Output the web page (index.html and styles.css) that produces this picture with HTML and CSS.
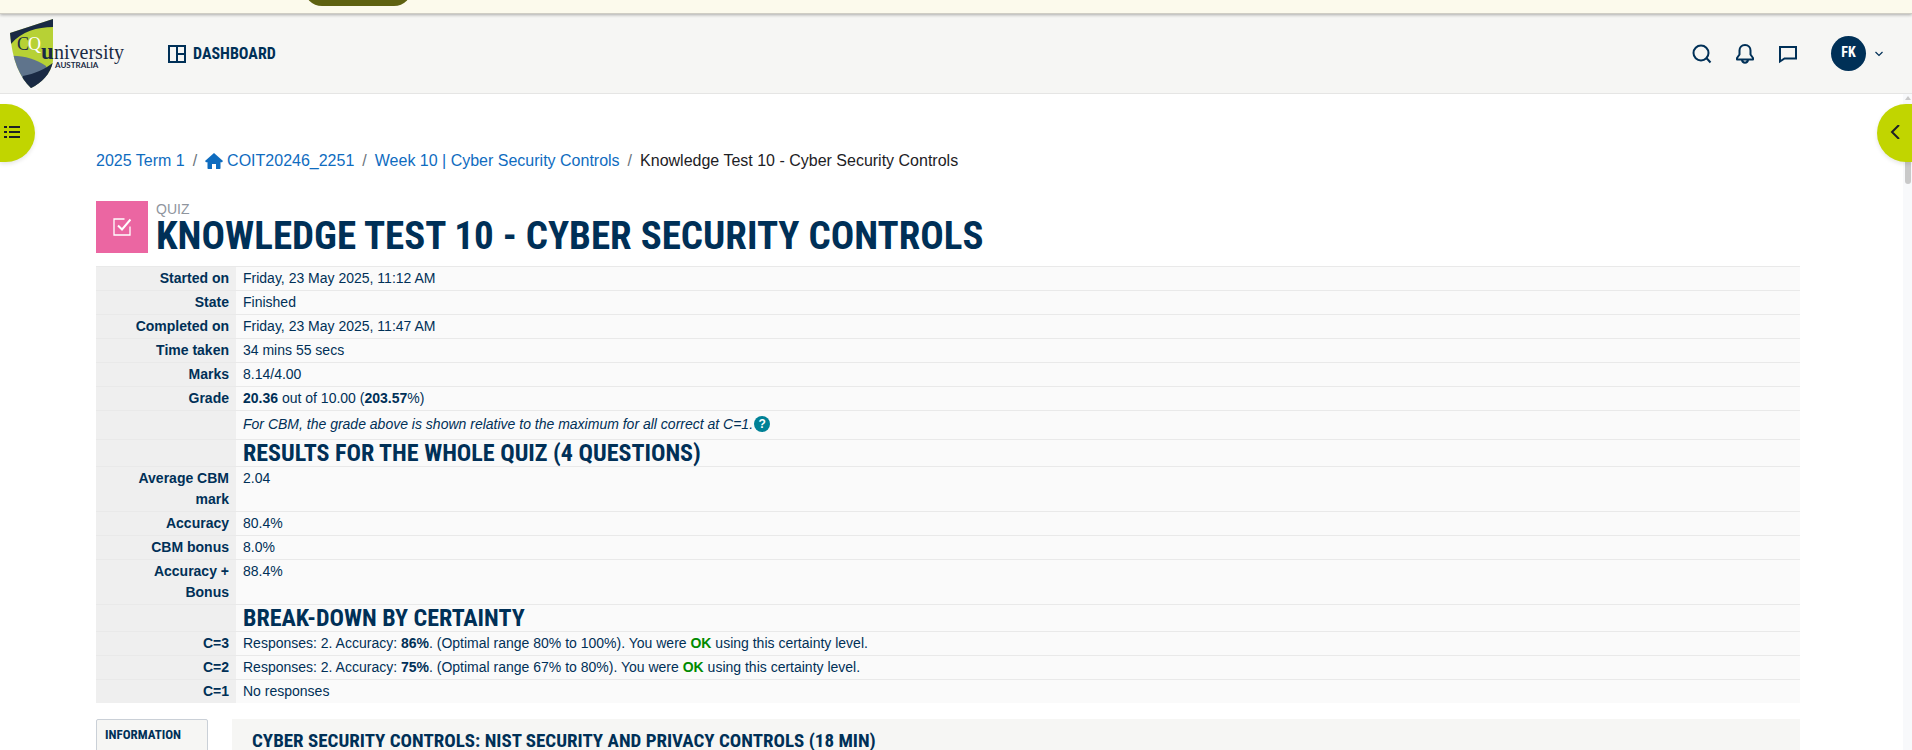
FILE: index.html
```
<!DOCTYPE html>
<html lang="en">
<head>
<meta charset="utf-8">
<title>Knowledge Test 10 - Cyber Security Controls</title>
<link rel="stylesheet" href="styles.css">
</head>
<body>
<div class="notice"><button class="notice-button" type="button" aria-label="Notice action"></button></div>
<header class="navbar">
  <a class="brand" href="#" aria-label="CQUniversity Australia">
    <svg class="logo" viewBox="0 0 120 72" role="img" aria-hidden="true">
      <defs><clipPath id="shield"><path d="M2 15 45 1V43C43 56 33 65 23 70 12 60 4 42 2 15Z"/></clipPath></defs>
      <g clip-path="url(#shield)">
        <rect width="46" height="72" fill="#b7d135"/>
        <path d="M0 0H46V9C30 9 14 13 3 26L0 26Z" fill="#1a2a44"/>
        <path d="M0 38C14 37 28 41 38 48L46 72H0Z" fill="#5f748c"/>
        <path d="M15 58C27 56 38 51 46 44V72H10Z" fill="#1a2a44"/>
      </g>
      <text class="logo-serif" x="9" y="32" font-size="18" fill="#1a2a44">C</text>
      <text class="logo-serif" x="20" y="32" font-size="18" fill="#ffffff">Q</text>
      <text class="logo-serif" x="33" y="41" font-size="23" font-weight="bold" fill="#1a2a44">u</text>
      <text class="logo-serif" x="46" y="41" font-size="20" fill="#1a2a44">niversity</text>
      <text class="logo-sans" x="47" y="50" font-size="8" fill="#1a2a44">AUSTRALIA</text>
    </svg>
  </a>
  <nav class="main-nav">
    <a class="nav-link" href="#">
      <svg class="icon-18" viewBox="0 0 18 18" fill="none" stroke="currentColor" stroke-width="2"><rect x="1" y="1" width="16" height="16"/><path d="M9 1V17M9 9H17"/></svg>
      <span>Dashboard</span>
    </a>
  </nav>
  <div class="tools">
    <button class="tool" type="button" aria-label="Search"><svg class="icon-20" viewBox="0 0 20 20" fill="none" stroke="currentColor" stroke-width="2"><circle cx="9" cy="9" r="7.5"/><path d="M14 13.500 18.500 18.500"/></svg></button>
    <button class="tool" type="button" aria-label="Notifications"><svg class="icon-20" viewBox="0 0 20 20" fill="none" stroke="currentColor" stroke-width="2" stroke-linejoin="round"><path d="M10 1C6.500 1 4.500 3.500 4.500 6.500V10.500L2 14V15.500H18V14L15.500 10.500V6.500C15.500 3.500 13.500 1 10 1ZM7 16C7.500 19.500 12.500 19.500 13 16"/></svg></button>
    <button class="tool" type="button" aria-label="Messages"><svg class="icon-20" viewBox="0 0 20 20" fill="none" stroke="currentColor" stroke-width="2"><path d="M2 3H18V14.500H6.500L2 17.500Z"/></svg></button>
    <button class="user" type="button" aria-label="User menu">
      <span class="avatar">FK</span>
      <svg class="icon-8" viewBox="0 0 8 8" fill="none" stroke="currentColor" stroke-width="1.200"><path d="M.5 2 4 5.500 7.500 2"/></svg>
    </button>
  </div>
</header>
<div class="viewport">
  <main class="page">
    <ol class="breadcrumb">
      <li><a href="#">2025 Term 1</a></li>
      <li><a href="#"><svg class="home" viewBox="0 0 18 16" fill="currentColor"><path d="M9 0 18 8 17 9.300H15.500V15C15.500 15.700 15.200 16 14.500 16H11V11H7V16H3.500C2.800 16 2.500 15.700 2.500 15V9.300H1L0 8Z"/></svg>COIT20246_2251</a></li>
      <li><a href="#">Week 10 | Cyber Security Controls</a></li>
      <li>Knowledge Test 10 - Cyber Security Controls</li>
    </ol>
    <div class="heading">
      <div class="activity-icon"><svg class="icon-18" viewBox="0 0 18 18" fill="none" stroke="currentColor"><path stroke-width="1.300" d="M11.500 1H1V17H17V8.500"/><path stroke-width="2" d="M5 7.500 9 11.500 17.500 1.500"/></svg></div>
      <div>
        <div class="kind">Quiz</div>
        <h1>Knowledge Test 10 - Cyber Security Controls</h1>
      </div>
    </div>
    <table class="summary">
      <tbody>
        <tr><th scope="row">Started on</th><td>Friday, 23 May 2025, 11:12 AM</td></tr>
        <tr><th scope="row">State</th><td>Finished</td></tr>
        <tr><th scope="row">Completed on</th><td>Friday, 23 May 2025, 11:47 AM</td></tr>
        <tr><th scope="row">Time taken</th><td>34 mins 55 secs</td></tr>
        <tr><th scope="row">Marks</th><td>8.14/4.00</td></tr>
        <tr><th scope="row">Grade</th><td><b>20.36</b> out of 10.00 (<b>203.57</b>%)</td></tr>
        <tr><th scope="row"></th><td><div class="note"><i>For CBM, the grade above is shown relative to the maximum for all correct at C=1.</i><button class="help" type="button" aria-label="Help with CBM">?</button></div></td></tr>
        <tr><th scope="row"></th><td><h3>Results for the whole quiz (4 questions)</h3></td></tr>
        <tr><th scope="row">Average CBM mark</th><td>2.04</td></tr>
        <tr><th scope="row">Accuracy</th><td>80.4%</td></tr>
        <tr><th scope="row">CBM bonus</th><td>8.0%</td></tr>
        <tr><th scope="row">Accuracy + Bonus</th><td>88.4%</td></tr>
        <tr><th scope="row"></th><td><h3>Break-down by certainty</h3></td></tr>
        <tr><th scope="row">C=3</th><td>Responses: 2. Accuracy: <b>86%</b>. (Optimal range 80% to 100%). You were <b class="ok">OK</b> using this certainty level.</td></tr>
        <tr><th scope="row">C=2</th><td>Responses: 2. Accuracy: <b>75%</b>. (Optimal range 67% to 80%). You were <b class="ok">OK</b> using this certainty level.</td></tr>
        <tr><th scope="row">C=1</th><td>No responses</td></tr>
      </tbody>
    </table>
    <section class="question">
      <aside class="info"><h4>Information</h4></aside>
      <div class="content"><h2>Cyber Security Controls: NIST Security and Privacy Controls (18 min)</h2></div>
    </section>
  </main>
  <div class="scrollbar"><span class="scroll-up"></span><span class="thumb"></span></div>
  <button class="drawer drawer-left" type="button" aria-label="Open course index"><svg class="icon-16" viewBox="0 0 16 14" fill="none" stroke="currentColor" stroke-width="2"><path d="M0 2H3M5 2H16M0 7H3M5 7H16M0 12H3M5 12H16"/></svg></button>
  <button class="drawer drawer-right" type="button" aria-label="Open block drawer"><svg class="icon-16" viewBox="0 0 16 14" fill="none" stroke="currentColor" stroke-width="2"><path d="M11 0 4 7 11 14"/></svg></button>
</div>
</body>
</html>
```
FILE: styles.css
```
* { box-sizing: border-box; }
body {
  margin: 0;
  height: 100vh;
  display: flex;
  flex-direction: column;
  overflow: hidden;
  background: #fff;
  color: #003057;
  font: 14px/21px "Liberation Sans", Arial, sans-serif;
}
button { border: 0; padding: 0; color: inherit; background: none; cursor: pointer; }
a { color: #0f6cbf; text-decoration: none; }
svg { display: block; }
h1, h2, h3, h4 { margin: 0; text-transform: uppercase; }
h1, h2, h3, h4, .nav-link, .avatar { font-family: "Roboto Condensed", "Liberation Sans Narrow", Roboto, sans-serif; font-weight: 700; }
.icon-20 { width: 20px; height: 20px; }
.icon-18 { width: 18px; height: 18px; }
.icon-16 { width: 16px; height: 14px; }
.icon-8 { width: 8px; height: 8px; }

.notice {
  flex: none;
  height: 14px;
  display: flex;
  align-items: flex-end;
  padding: 0 0 7px 304px;
  background: #fcfaec;
  border-bottom: 1px solid #cfcdc4;
  box-shadow: 0 1px 3px rgba(0, 0, 0, .3);
  position: relative;
  z-index: 1;
}
.notice-button { flex: none; width: 108px; height: 36px; border-radius: 18px; background: #5e6110; }

.navbar {
  flex: none;
  height: 80px;
  display: flex;
  align-items: center;
  padding: 0 29px 0 8px;
  background: #f6f6f4;
  border-bottom: 1px solid #e5e5e4;
}
.logo { width: 120px; height: 72px; }
.logo-serif { font-family: "Liberation Serif", serif; }
.logo-sans { font-family: Lato, sans-serif; font-weight: 700; }
.main-nav { margin-left: 40px; }
.nav-link { display: flex; align-items: center; gap: 7px; color: #003057; font-size: 16px; text-transform: uppercase; }
.tools { display: flex; align-items: center; gap: 23px; margin-left: auto; }
.user { display: flex; align-items: center; gap: 9px; margin-left: 10px; }
.avatar { width: 35px; height: 35px; border-radius: 50%; background: #003057; color: #fff; font-size: 14px; line-height: 33px; text-align: center; }

.viewport { flex: 1; min-height: 0; display: flex; position: relative; }
.page { flex: 1; min-width: 0; overflow: hidden; padding: 55px 103px 0 96px; }
.breadcrumb { display: flex; margin: 0 0 28px; padding: 0; list-style: none; font-size: 16px; line-height: 24px; color: #1d2125; }
.breadcrumb li + li::before { content: "/"; padding: 0 8px; color: #6a737b; }
.breadcrumb li:nth-child(n+2) { display: flex; }
.breadcrumb a { display: flex; align-items: center; gap: 4px; }
.home { width: 18px; height: 16px; }
.heading { display: flex; align-items: flex-start; gap: 8px; margin-bottom: 12px; }
.activity-icon { flex: none; width: 52px; height: 52px; display: grid; place-items: center; background: #eb66a2; color: #fff; }
.kind { color: #8f959e; font-size: 14px; line-height: 17px; text-transform: uppercase; }
h1 { font-size: 39px; line-height: 36px; }

.summary { width: 100%; border-collapse: separate; border-spacing: 0; table-layout: fixed; }
.summary th, .summary td { height: 24px; border-top: 1px solid #e9e9e9; padding: 1px 7px; vertical-align: top; }
.summary th { width: 140px; padding-left: 20px; background: #efefef; text-align: right; font-weight: 700; }
.summary td { background: #fafafa; }
.note { display: flex; align-items: center; gap: 1px; height: 26px; padding-bottom: 2px; }
.help { width: 16px; height: 16px; border-radius: 50%; background: #008196; color: #fff; font: 700 12px/16px "Liberation Sans", Arial, sans-serif; }
h3 { font-size: 24px; line-height: 24px; }
.ok { color: #008a00; }

.question { display: flex; align-items: flex-start; gap: 24px; margin-top: 16px; }
.info { flex: none; width: 112px; height: 96px; padding: 4px 8px; border: 1px solid #cad0d7; border-radius: 2px; background: #f6f6f4; }
h4 { font-size: 13px; line-height: 21px; }
.content { flex: 1; min-height: 120px; padding: 8px 20px; background: #f6f6f4; }
h2 { font-size: 19px; line-height: 27px; }

.scrollbar { flex: none; width: 9px; display: flex; flex-direction: column; align-items: center; padding-top: 2px; background: #f8f9fb; }
.scroll-up { border: 3px solid transparent; border-top: 0; border-bottom: 4px solid #c9c9c9; }
.thumb { width: 6px; height: 80px; margin-top: 4px; border-radius: 3px; background: #c9c9c9; }
.drawer { position: absolute; top: 10px; width: 35px; height: 58px; display: flex; align-items: center; padding-bottom: 2px; background: #c1d500; color: #1d2125; box-shadow: 0 2px 4px rgba(0, 0, 0, .1); }
.drawer-left { left: 0; padding-left: 4px; border-radius: 0 29px 29px 0; }
.drawer-right { right: 0; padding-left: 11px; border-radius: 29px 0 0 29px; }
```
